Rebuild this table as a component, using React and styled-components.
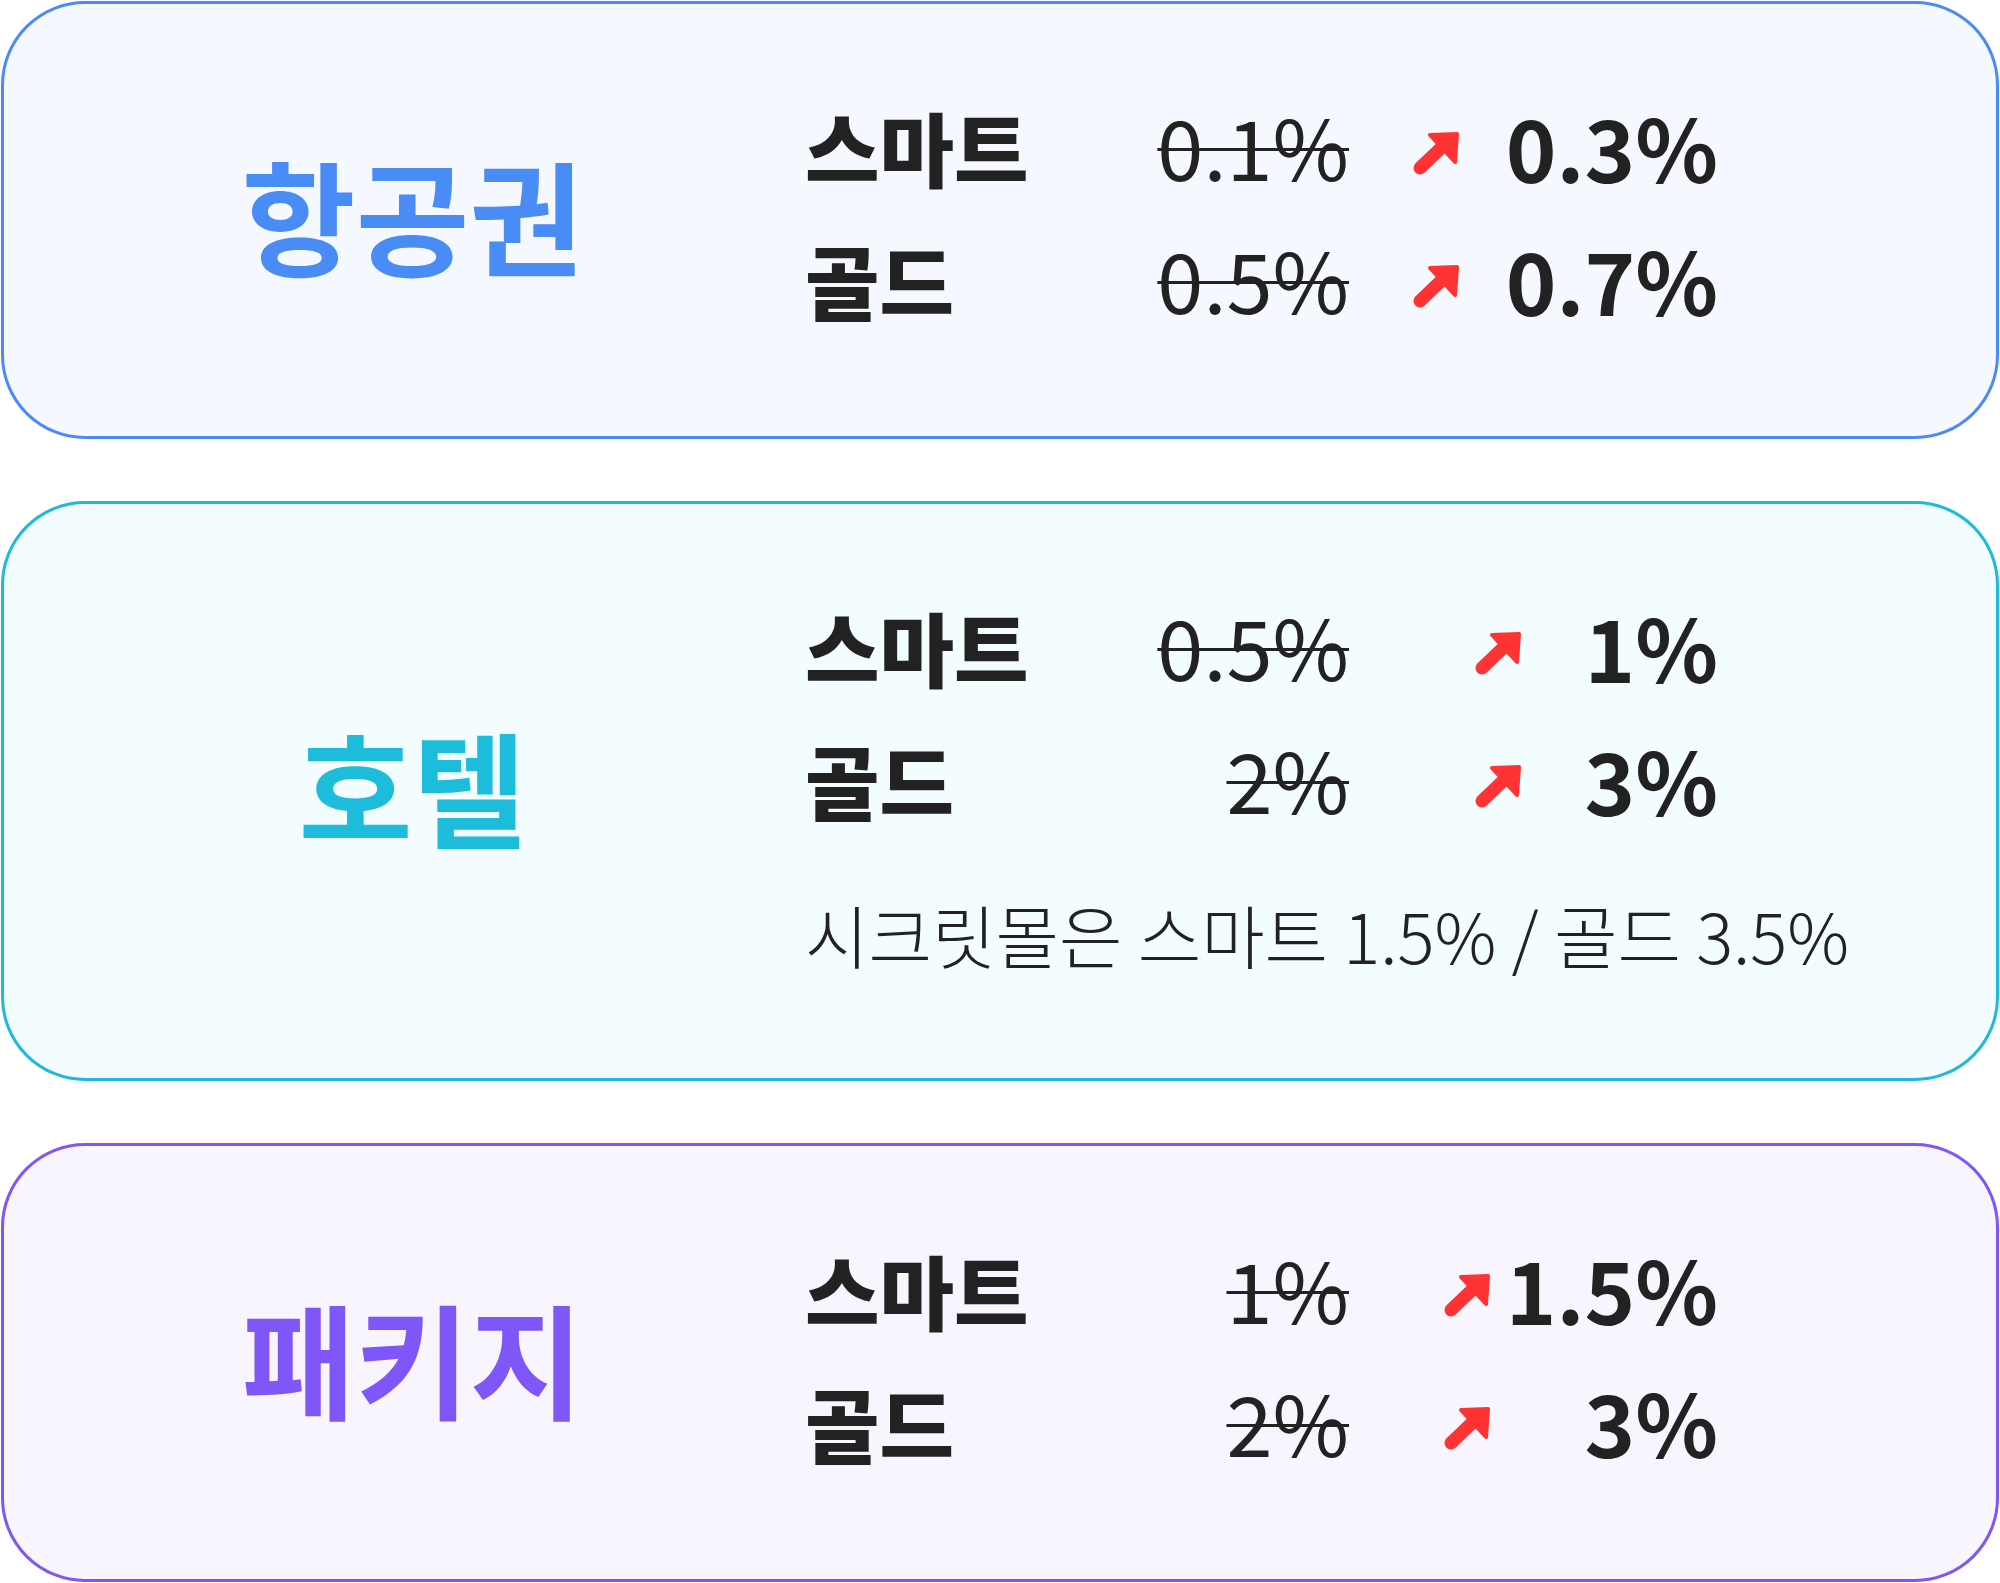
import React from "react";
import styled, { createGlobalStyle } from "styled-components";

const GlobalStyle = createGlobalStyle`
  html, body {
    margin: 0;
    padding: 0;
    background: #ffffff;
  }
  body {
    font-family: "Noto Sans CJK KR", "Noto Sans", sans-serif;
    color: #222222;
  }
`;

const tones = {
  blue: { border: "#4b8bf5", bg: "#f5f9ff", text: "#4a8cf6" },
  cyan: { border: "#20b9d9", bg: "#f3fcfe", text: "#1dbcdb" },
  purple: { border: "#8256f5", bg: "#f8f5ff", text: "#7f56f7" },
};

const cards = [
  {
    id: "air",
    title: "항공권",
    tone: "blue",
    height: 438,
    arrowGap: 64,
    rows: [
      { label: "스마트", old: "0.1%", now: "0.3%" },
      { label: "골드", old: "0.5%", now: "0.7%" },
    ],
  },
  {
    id: "hotel",
    title: "호텔",
    tone: "cyan",
    height: 580,
    arrowGap: 126,
    rows: [
      { label: "스마트", old: "0.5%", now: "1%" },
      { label: "골드", old: "2%", now: "3%" },
    ],
    note: "시크릿몰은 스마트 1.5% / 골드 3.5%",
  },
  {
    id: "pkg",
    title: "패키지",
    tone: "purple",
    height: 439,
    arrowGap: 95,
    rows: [
      { label: "스마트", old: "1%", now: "1.5%" },
      { label: "골드", old: "2%", now: "3%" },
    ],
  },
];

function UpArrow() {
  return (
    <svg width="46" height="44" viewBox="0 0 46 44">
      <line
        x1="7"
        y1="37"
        x2="29"
        y2="16"
        stroke="#ff3333"
        strokeWidth="13"
        strokeLinecap="round"
      />
      <polygon
        points="44,3 17,4 42,31"
        fill="#ff3333"
        stroke="#ff3333"
        strokeWidth="4"
        strokeLinejoin="round"
      />
    </svg>
  );
}

export default function App() {
  return (
    <>
      <GlobalStyle />
      <Page>
        {cards.map((card) => (
          <Card key={card.id} $tone={tones[card.tone]} $height={card.height}>
            <TitleCol>
              <Title $color={tones[card.tone].text}>{card.title}</Title>
            </TitleCol>
            <Body>
              {card.rows.map((row) => (
                <Row key={row.label} $arrowGap={card.arrowGap}>
                  <Label>{row.label}</Label>
                  <OldRate>{row.old}</OldRate>
                  <span />
                  <ArrowBox>
                    <UpArrow />
                  </ArrowBox>
                  <NewRate>{row.now}</NewRate>
                </Row>
              ))}
              {card.note && <Note>{card.note}</Note>}
            </Body>
          </Card>
        ))}
      </Page>
    </>
  );
}

const Page = styled.main`
  display: flex;
  flex-direction: column;
  gap: 62px;
  padding: 1px 1px 0 1px;
  width: 2000px;
  box-sizing: border-box;
`;

const Card = styled.section`
  display: flex;
  align-items: center;
  box-sizing: border-box;
  height: ${(p) => p.$height}px;
  border: 3px solid ${(p) => p.$tone.border};
  background: ${(p) => p.$tone.bg};
  border-radius: 84px;
`;

const TitleCol = styled.div`
  flex: 0 0 785px;
  padding-left: 16px;
  display: flex;
  justify-content: center;
`;

const Title = styled.h2`
  margin: 0 0 14px 0;
  font-size: 124px;
  font-weight: 700;
  line-height: 1;
  letter-spacing: 0;
  color: ${(p) => p.$color};
`;

const Body = styled.div`
  display: flex;
  flex-direction: column;
  padding-bottom: 16px;
`;

const Row = styled.div`
  display: grid;
  grid-template-columns: 248px 296px ${(p) => p.$arrowGap}px 46px ${(p) =>
      369 - p.$arrowGap - 46}px;
  align-items: center;
  height: 133px;
`;

const Label = styled.span`
  font-size: 81px;
  font-weight: 900;
  line-height: 1;
  color: #222222;
`;

const OldRate = styled.span`
  justify-self: end;
  font-size: 83px;
  font-weight: 400;
  line-height: 1;
  text-decoration: line-through;
  text-decoration-thickness: 3px;
  color: #222222;
`;

const ArrowBox = styled.span`
  display: flex;
  align-items: center;
  justify-content: center;
  margin-top: 14px;
`;

const NewRate = styled.span`
  justify-self: end;
  font-size: 86px;
  font-weight: 700;
  line-height: 1;
  color: #222222;
`;

const Note = styled.p`
  margin: 55px 0 18px 0;
  font-size: 69px;
  font-weight: 300;
  line-height: 1;
  white-space: nowrap;
  color: #222222;
`;
